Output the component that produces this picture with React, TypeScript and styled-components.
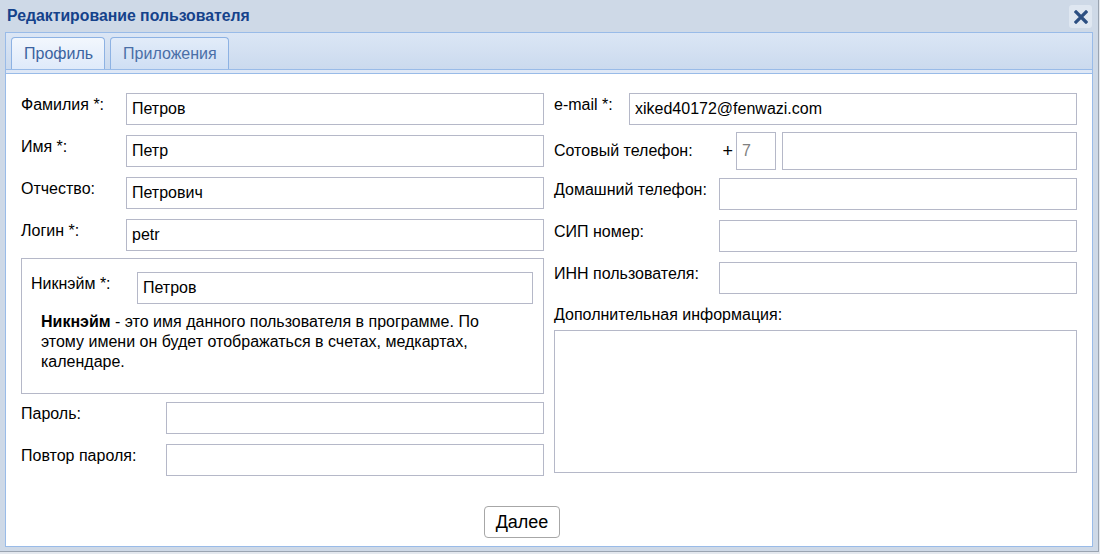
import React from "react";
import styled, { createGlobalStyle } from "styled-components";

const Global = createGlobalStyle`
  html, body { margin: 0; padding: 0; background: #e4e8ee; }
  body { font-family: "Liberation Sans", Arial, sans-serif; color: #000; }
  * { box-sizing: border-box; }
`;

const Window = styled.div`
  width: 1099px;
  height: 552px;
  background: #ced9e7;
  border-right: 1px solid #9aa4b1;
  border-bottom: 1px solid #9aa4b1;
  display: flex;
  flex-direction: column;
`;

const Header = styled.div`
  height: 32px;
  flex: none;
  display: flex;
  align-items: center;
  justify-content: space-between;
  padding: 0 6px 0 7px;
`;

const Title = styled.div`
  font-weight: bold;
  font-size: 15.8px;
  color: #15428b;
  margin-top: -1px;
`;

const CloseButton = styled.button`
  width: 23px;
  height: 23px;
  border: none;
  border-radius: 3px;
  background: #dfe7f1;
  display: flex;
  align-items: center;
  justify-content: center;
  padding: 0;
  margin-top: 1px;
`;

const TabPanel = styled.div`
  flex: 1;
  display: flex;
  flex-direction: column;
  margin: 0 5px 4px 5px;
`;

const TabStrip = styled.div`
  height: 37px;
  flex: none;
  display: flex;
  align-items: flex-end;
  gap: 5px;
  padding: 0 5px;
  border: 1px solid #99bbe8;
  border-bottom: none;
  background: linear-gradient(#dbe6f5, #cbdaee);
`;

const Tab = styled.div<{ $active?: boolean }>`
  height: 32px;
  padding: 0 11px 0 12px;
  display: flex;
  align-items: center;
  font-size: 16px;
  color: ${(p) => (p.$active ? "#3b63a0" : "#4a6fa7")};
  border: 1px solid #8db2e3;
  border-bottom: none;
  border-radius: 4px 4px 0 0;
  background: ${(p) =>
    p.$active
      ? "linear-gradient(#f2f7fd, #dfeafa)"
      : "linear-gradient(#e2ecf9, #cfdff4)"};
`;

const StripBar = styled.div`
  height: 5px;
  flex: none;
  background: #dfe8f6;
  border: 1px solid #99bbe8;
`;

const Body = styled.div`
  flex: 1;
  display: flex;
  flex-direction: column;
  background: #fff;
  border: 1px solid #99bbe8;
  border-top: none;
  padding: 19px 15px 8px 15px;
`;

const Columns = styled.div`
  display: grid;
  grid-template-columns: 1fr 1fr;
  column-gap: 10px;
  align-items: start;
`;

const Column = styled.div`
  display: flex;
  flex-direction: column;
`;

const Row = styled.div<{ $mt?: number; $h?: number }>`
  display: flex;
  align-items: flex-start;
  height: ${(p) => p.$h ?? 32}px;
  margin-top: ${(p) => p.$mt ?? 10}px;
  &:first-child {
    margin-top: 0;
  }
`;

const Label = styled.label<{ $w: number; $pt?: number }>`
  flex: none;
  width: ${(p) => p.$w}px;
  font-size: 16px;
  line-height: 18px;
  padding-top: ${(p) => p.$pt ?? 3}px;
  color: #000;
`;

const Input = styled.input<{ $w?: number; $muted?: boolean }>`
  flex: ${(p) => (p.$w ? "none" : "1")};
  width: ${(p) => (p.$w ? `${p.$w}px` : "auto")};
  min-width: 0;
  height: 100%;
  border: 1px solid #b5b8c8;
  padding: 0 5px;
  font-family: "Liberation Sans", Arial, sans-serif;
  font-size: 16px;
  color: ${(p) => (p.$muted ? "#808080" : "#000")};
  background: #fff;
  outline: none;
`;

const Plus = styled.span`
  flex: none;
  width: 18px;
  font-size: 18px;
  align-self: center;
  text-align: right;
  padding-right: 3px;
  margin-top: 1px;
`;

const PhoneLabel = styled.label`
  flex: 1;
  font-size: 16px;
  line-height: 18px;
  align-self: center;
`;

const Gap = styled.span`
  width: 6px;
  flex: none;
`;

const Fieldset = styled.div`
  margin-top: 7px;
  border: 1px solid #b5b8c8;
  padding: 13px 10px 21px 9px;
`;

const Desc = styled.p`
  margin: 8px 0 0 10px;
  width: 440px;
  font-size: 16px;
  line-height: 20px;
  b {
    font-weight: bold;
  }
`;

const BlockLabel = styled.div`
  font-size: 16px;
  line-height: 18px;
  margin-top: 12px;
`;

const TextArea = styled.textarea`
  margin-top: 6px;
  height: 143px;
  border: 1px solid #b5b8c8;
  resize: none;
  outline: none;
  font-family: "Liberation Sans", Arial, sans-serif;
  font-size: 16px;
`;

const Footer = styled.div`
  margin-top: 30px;
  display: flex;
  justify-content: center;
  padding-right: 54px;
`;

const Button = styled.button`
  width: 76px;
  height: 32px;
  border: 1px solid #a7a7a7;
  border-radius: 4px;
  background: #fff;
  font-family: "Liberation Sans", Arial, sans-serif;
  font-size: 18px;
  color: #000;
  padding: 0;
`;

const CloseIcon = () => (
  <svg width="14" height="14" viewBox="0 0 14 14">
    <path d="M2 2 L12 12 M12 2 L2 12" stroke="#2c4f82" strokeWidth="3.2" strokeLinecap="square" />
  </svg>
);

export default function App() {
  return (
    <>
      <Global />
      <Window>
        <Header>
          <Title>Редактирование пользователя</Title>
          <CloseButton aria-label="Закрыть">
            <CloseIcon />
          </CloseButton>
        </Header>
        <TabPanel>
          <TabStrip>
            <Tab $active>Профиль</Tab>
            <Tab>Приложения</Tab>
          </TabStrip>
          <StripBar />
          <Body>
            <Columns>
              <Column>
                <Row>
                  <Label $w={105}>Фамилия *:</Label>
                  <Input defaultValue="Петров" />
                </Row>
                <Row>
                  <Label $w={105}>Имя *:</Label>
                  <Input defaultValue="Петр" />
                </Row>
                <Row>
                  <Label $w={105}>Отчество:</Label>
                  <Input defaultValue="Петрович" />
                </Row>
                <Row>
                  <Label $w={105}>Логин *:</Label>
                  <Input defaultValue="petr" />
                </Row>
                <Fieldset>
                  <Row>
                    <Label $w={106}>Никнэйм *:</Label>
                    <Input defaultValue="Петров" />
                  </Row>
                  <Desc>
                    <b>Никнэйм</b> - это имя данного пользователя в программе. По этому имени он
                    будет отображаться в счетах, медкартах, календаре.
                  </Desc>
                </Fieldset>
                <Row $mt={8}>
                  <Label $w={145}>Пароль:</Label>
                  <Input type="password" />
                </Row>
                <Row>
                  <Label $w={145}>Повтор пароля:</Label>
                  <Input type="password" />
                </Row>
              </Column>
              <Column>
                <Row>
                  <Label $w={75}>e-mail *:</Label>
                  <Input defaultValue="xiked40172@fenwazi.com" />
                </Row>
                <Row $mt={7} $h={38}>
                  <PhoneLabel>Сотовый телефон:</PhoneLabel>
                  <Plus>+</Plus>
                  <Input $w={40} $muted defaultValue="7" />
                  <Gap />
                  <Input $w={295} />
                </Row>
                <Row $mt={8}>
                  <Label $w={165}>Домашний телефон:</Label>
                  <Input />
                </Row>
                <Row>
                  <Label $w={165}>СИП номер:</Label>
                  <Input />
                </Row>
                <Row>
                  <Label $w={165}>ИНН пользователя:</Label>
                  <Input />
                </Row>
                <BlockLabel>Дополнительная информация:</BlockLabel>
                <TextArea />
              </Column>
            </Columns>
            <Footer>
              <Button>Далее</Button>
            </Footer>
          </Body>
        </TabPanel>
      </Window>
    </>
  );
}
